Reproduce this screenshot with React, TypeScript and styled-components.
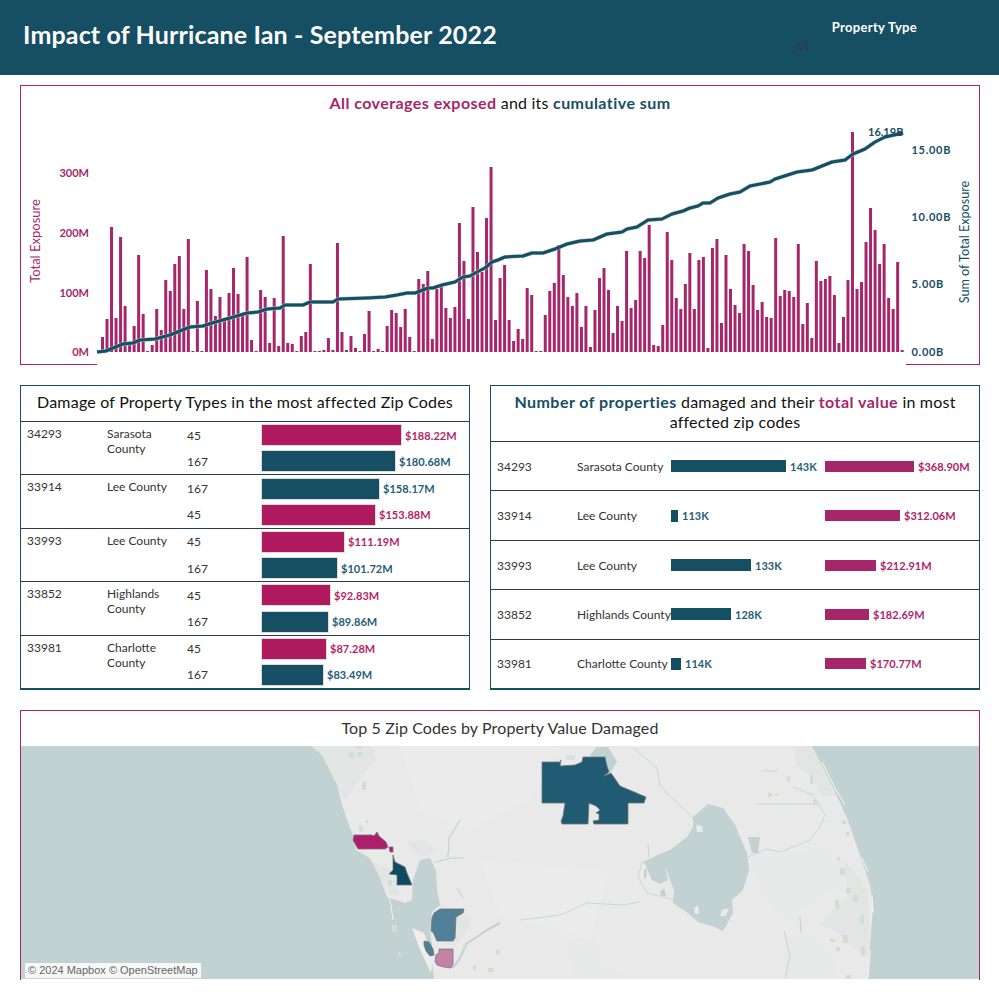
import { createGlobalStyle, styled } from "styled-components";

const TEAL = "#164e64";
const PLUM = "#a6266a";
const ROSE = "#ae1a5d";
const WATER = "#c2d1d1";
const LAND = "#e9e9e9";
const FONT = `"Lato", "Open Sans", sans-serif`;

const GlobalStyle = createGlobalStyle`
  html, body {
    margin: 0;
    padding: 0;
    background: #fff;
    font-family: ${FONT};
  }
`;

const Page = styled.div`
  width: 999px;
  height: 999px;
  overflow: hidden;
  display: flex;
  flex-direction: column;
`;

const Header = styled.header`
  height: 75px;
  flex: none;
  box-sizing: border-box;
  background: ${TEAL};
  color: #fff;
  display: flex;
  justify-content: space-between;
  padding: 0 82px 7px 23px;
`;

const HeaderTitle = styled.h1`
  margin: 0;
  align-self: center;
  font-size: 25px;
  font-weight: 700;
  letter-spacing: 0.15px;
`;

const Filter = styled.div`
  width: 170px;
  padding-top: 19px;
  position: relative;
  text-align: right;
  font-size: 13px;
  font-weight: 700;
  letter-spacing: 0.3px;
`;

const FilterValue = styled.span`
  position: absolute;
  left: 48px;
  top: 39px;
  font-size: 12px;
  font-weight: 400;
  color: #2f3f48;
`;

const Content = styled.main`
  flex: 1;
  display: flex;
  flex-direction: column;
  gap: 20px;
  padding: 10px 19px 0 20px;
`;

const ChartPanel = styled.section`
  height: 280px;
  box-sizing: border-box;
  border: 1px solid ${PLUM};
  border-bottom: none;
  background: linear-gradient(
      to right,
      ${PLUM} 76px,
      transparent 76px,
      transparent 885px,
      ${PLUM} 885px
    )
    bottom / 100% 1px no-repeat;
`;

const ChartTitle = styled.h2`
  margin: 0;
  box-sizing: border-box;
  padding-top: 7px;
  height: 25px;
  text-align: center;
  font-size: 16px;
  font-weight: 400;
  letter-spacing: 0.2px;
  color: #111;
`;

const Accent = styled.b<{ $tone: "teal" | "plum" }>`
  color: ${(p) => (p.$tone === "teal" ? TEAL : PLUM)};
  letter-spacing: 0.45px;
`;

const ChartSvg = styled.svg`
  display: block;
  width: 958px;
  height: 253px;
`;

const Row = styled.div`
  display: grid;
  grid-template-columns: 450px 490px;
  gap: 20px;
  height: 305px;
`;

const TablePanel = styled.section`
  box-sizing: border-box;
  border: 1px solid ${TEAL};
  border-bottom-width: 2px;
  display: flex;
  flex-direction: column;
`;

const TableTitle = styled.h2<{ $height: number }>`
  margin: 0;
  height: ${(p) => p.$height}px;
  box-sizing: border-box;
  flex: none;
  padding: 6px 12px 0;
  text-align: center;
  font-size: 16px;
  line-height: 20px;
  font-weight: 400;
  letter-spacing: 0.2px;
  color: #111;
  border-bottom: 1px solid #2b3d47;
`;

const ZipGroup = styled.div`
  flex: 1;
  display: grid;
  grid-template-columns: 80px 80px 1fr;
  padding-left: 6px;
  font-size: 12px;
  line-height: 15px;
  color: #333;
  border-bottom: 1px solid #2b3d47;
  &:last-child {
    border-bottom: none;
  }
`;

const ZipCell = styled.div`
  padding-top: 4px;
`;

const TypeRows = styled.div`
  display: grid;
  grid-auto-rows: 1fr;
`;

const TypeRow = styled.div`
  display: grid;
  grid-template-columns: 75px 1fr;
  align-items: center;
`;

const TypeBar = styled.div<{ $tone: string }>`
  height: 20px;
  background: ${(p) => p.$tone};
  box-shadow: 0 0 0 1px #dcdcdc;
`;

const BarLine = styled.div`
  display: flex;
  align-items: center;
  gap: 4px;
`;

const BarLabel = styled.span<{ $tone: string }>`
  color: ${(p) => p.$tone};
  font-size: 11px;
  font-weight: 700;
  letter-spacing: 0.05px;
`;

const ValueRow = styled.div`
  flex: 1;
  display: grid;
  grid-template-columns: 80px 94px 154px 1fr;
  align-items: center;
  padding-left: 6px;
  font-size: 12px;
  color: #333;
  border-bottom: 1px solid #2b3d47;
  &:last-child {
    border-bottom: none;
  }
`;

const ValueBar = styled.div<{ $tone: string; $height: number }>`
  height: ${(p) => p.$height}px;
  background: ${(p) => p.$tone};
`;

const MapPanel = styled.section`
  height: 270px;
  box-sizing: border-box;
  border: 1px solid ${PLUM};
  border-bottom: none;
  display: flex;
  flex-direction: column;
`;

const MapTitle = styled.h2`
  margin: 0;
  height: 35px;
  flex: none;
  box-sizing: border-box;
  padding-top: 7px;
  text-align: center;
  font-size: 16px;
  font-weight: 400;
  letter-spacing: 0.12px;
  color: #333;
`;

const MapArea = styled.div`
  position: relative;
  flex: 1;
  line-height: 0;
`;

const MapSvg = styled.svg`
  display: block;
  width: 958px;
  height: 233px;
`;

const Attribution = styled.span`
  position: absolute;
  left: 4px;
  bottom: 2px;
  padding: 0 3px;
  background: rgba(255, 255, 255, 0.85);
  font-family: "Liberation Sans", sans-serif;
  font-size: 11px;
  line-height: 15px;
  color: #666;
`;

// px height of each bar above the baseline, read left to right
const exposure = [
  15, 33, 125, 34, 115, 46, 8, 26, 97, 38, 1, 7, 43, 22, 72, 61, 88, 96, 43, 113, 1, 51, 1, 82, 63,
  36, 55, 32, 59, 84, 58, 39, 95, 12, 1, 62, 55, 9, 54, 6, 116, 9, 8, 1, 16, 20, 88, 1, 1, 2, 14, 2,
  109, 20, 2, 16, 4, 1, 18, 41, 1, 3, 1, 26, 42, 39, 25, 43, 15, 1, 73, 68, 81, 13, 63, 66, 44, 34,
  45, 129, 91, 33, 145, 100, 80, 134, 185, 32, 74, 87, 32, 11, 23, 13, 64, 57, 1, 1, 37, 61, 69,
  107, 77, 55, 46, 59, 25, 46, 5, 42, 74, 84, 62, 19, 46, 31, 101, 44, 52, 101, 94, 127, 7, 6, 27,
  120, 92, 54, 43, 68, 99, 43, 92, 95, 4, 104, 113, 29, 97, 63, 47, 39, 108, 101, 67, 42, 50, 35,
  34, 114, 56, 62, 61, 55, 108, 28, 49, 14, 91, 71, 73, 76, 57, 9, 35, 72, 220, 63, 70, 110, 144,
  122, 88, 108, 54, 43, 90, 2,
];

const cumulative =
  "97,352 106,351 113,348 123,344 133,343 140,340 155,339 170,335 180,331 190,327 203,326 212,323 230,318 247,313 258,312 267,309 280,308 285,305 303,305 310,302 333,302 338,299 367,298 385,297 397,295 407,293 415,293 428,288 433,288 442,285 455,282 463,277 470,276 477,272 485,268 492,262 498,260 505,257 523,256 532,253 543,253 555,249 567,244 580,241 593,240 607,234 622,232 627,229 637,227 648,220 662,219 672,214 683,211 690,208 698,206 703,203 710,203 718,198 730,194 740,192 750,186 770,182 775,179 797,172 812,170 832,162 845,160 853,154 865,149 875,142 885,137 903,133";

const typeGroups = [
  {
    zip: "34293",
    county: "Sarasota County",
    rows: [
      { type: "45", width: 139, label: "$188.22M", rose: true },
      { type: "167", width: 133, label: "$180.68M", rose: false },
    ],
  },
  {
    zip: "33914",
    county: "Lee County",
    rows: [
      { type: "167", width: 117, label: "$158.17M", rose: false },
      { type: "45", width: 113, label: "$153.88M", rose: true },
    ],
  },
  {
    zip: "33993",
    county: "Lee County",
    rows: [
      { type: "45", width: 82, label: "$111.19M", rose: true },
      { type: "167", width: 75, label: "$101.72M", rose: false },
    ],
  },
  {
    zip: "33852",
    county: "Highlands County",
    rows: [
      { type: "45", width: 68, label: "$92.83M", rose: true },
      { type: "167", width: 66, label: "$89.86M", rose: false },
    ],
  },
  {
    zip: "33981",
    county: "Charlotte County",
    rows: [
      { type: "45", width: 64, label: "$87.28M", rose: true },
      { type: "167", width: 61, label: "$83.49M", rose: false },
    ],
  },
];

const valueRows = [
  { zip: "34293", county: "Sarasota County", count: 115, countLabel: "143K", total: 89, totalLabel: "$368.90M" },
  { zip: "33914", county: "Lee County", count: 7, countLabel: "113K", total: 75, totalLabel: "$312.06M" },
  { zip: "33993", county: "Lee County", count: 80, countLabel: "133K", total: 51, totalLabel: "$212.91M" },
  { zip: "33852", county: "Highlands County", count: 60, countLabel: "128K", total: 44, totalLabel: "$182.69M" },
  { zip: "33981", county: "Charlotte County", count: 10, countLabel: "114K", total: 41, totalLabel: "$170.77M" },
];

const leftTicks = [
  { y: 353, text: "0M" },
  { y: 294, text: "100M" },
  { y: 234, text: "200M" },
  { y: 174, text: "300M" },
];

const rightTicks = [
  { y: 353.5, text: "0.00B" },
  { y: 285.5, text: "5.00B" },
  { y: 218.5, text: "10.00B" },
  { y: 151.5, text: "15.00B" },
];

// [x, y, w, h] of the small green parks on the map
const parks = [
  [349, 752, 5, 6], [357, 746, 5, 3], [358, 752, 4, 5], [362, 782, 4, 8], [359, 826, 4, 6], [366, 820, 2, 3],
  [388, 880, 4, 6], [392, 925, 5, 7], [398, 952, 3, 5], [430, 925, 3, 3], [463, 945, 4, 4], [496, 950, 4, 5],
  [473, 965, 3, 5], [488, 968, 5, 4], [768, 793, 4, 4], [775, 794, 3, 2], [787, 776, 3, 6], [810, 775, 3, 9],
  [813, 800, 4, 5], [842, 820, 4, 4], [846, 832, 3, 4], [837, 857, 3, 4], [840, 868, 5, 7], [846, 888, 5, 5],
  [853, 895, 5, 7], [835, 900, 4, 8], [860, 915, 4, 9], [843, 935, 5, 8], [830, 939, 5, 3], [861, 946, 4, 10],
  [846, 975, 5, 4], [836, 947, 4, 4],
];

function ExposureChart() {
  return (
    <ChartSvg viewBox="21 111 958 253">
      {exposure.map((h, i) => (
        <rect key={i} x={101 + i * 4.518} y={352 - h} width={3} height={h} fill={PLUM} />
      ))}
      <polyline points={cumulative} fill="none" stroke="#a9c2cb" strokeWidth={4} />
      <polyline points={cumulative} fill="none" stroke={TEAL} strokeWidth={3} strokeLinejoin="round" />
      <g fontFamily={FONT} fontSize={11} fontWeight={700} dominantBaseline="middle">
        {leftTicks.map((t) => (
          <text key={t.text} x={89} y={t.y} textAnchor="end" fill={PLUM}>
            {t.text}
          </text>
        ))}
        {rightTicks.map((t) => (
          <text key={t.text} x={911.5} y={t.y} fill={TEAL} letterSpacing={0.7}>
            {t.text}
          </text>
        ))}
        <text x={868} y={133} fill={TEAL}>
          16.19B
        </text>
      </g>
      <g fontFamily={FONT} textAnchor="middle">
        <text transform="translate(40 241) rotate(-90)" fill={PLUM} fontSize={13}>
          Total Exposure
        </text>
        <text transform="translate(969 242) rotate(-90)" fill={TEAL} fontSize={12.6}>
          Sum of Total Exposure
        </text>
      </g>
    </ChartSvg>
  );
}

function FloridaMap() {
  return (
    <MapSvg viewBox="21 746 958 233">
      <rect x={21} y={746} width={958} height={233} fill={LAND} />
      {/* soft land tones */}
      <g fill="#e3e4e4">
        <path d="M312 746 L372 746 L375 760 L355 785 L345 800 L330 778 Z" />
        <path d="M408 842 L425 840 L437 850 L425 858 L412 852 Z" />
        <path d="M372 862 L392 870 L400 895 L388 895 Z" />
        <path d="M795 746 L812 746 L835 795 L822 797 L810 775 L796 765 Z" />
        <path d="M845 860 L868 890 L870 960 L850 945 L835 930 L818 925 L848 895 Z" />
        <path d="M440 905 L470 915 L470 925 L456 945 L445 945 Z" />
      </g>
      <g fill="#ebebeb">
        <path d="M400 746 L560 746 L530 800 L470 830 L420 810 Z" />
        <path d="M480 860 L610 870 L590 940 L500 915 Z" />
      </g>
      <g fill="#e6e9e7">
        <path d="M752 860 L830 850 L845 880 L800 910 L800 930 L770 905 Z" />
        <path d="M785 935 L810 935 L835 960 L835 979 L785 979 Z" />
        <path d="M570 940 L595 938 L600 965 L630 978 L575 979 Z" />
      </g>
      {/* gulf */}
      <path
        fill={WATER}
        d="M21 746 L311 746 L322 755 L337 785 L342 805 L348 822 L353 835 L356 850 L370 858 L380 878 L387 897 L405 903 L412 900 L413 880 L420 860 L430 858 L436 870 L437 890 L440 905 L432 912 L430 930 L432 945 L432 962 L434 979 L21 979 Z"
      />
      <path fill="#eeeeee" d="M412 928 L424 933 L433 958 L431 973 L421 952 Z" />
      <path fill="none" stroke="#f1f3f3" strokeWidth={1} d="M386 885 L391 905 L393 920" />
      {/* atlantic */}
      <path
        fill={WATER}
        d="M812 746 L979 746 L979 979 L868 979 L870 945 L873 908 L870 885 L860 855 L847 818 L833 788 L820 762 Z"
      />
      <path
        fill="none"
        stroke="#f5f6f6"
        strokeWidth={1}
        d="M822 762 L835 788 L845 805 M862 858 L868 872 M872 895 L873 912 M870 950 L868 978"
      />
      {/* lake okeechobee */}
      <path
        fill={WATER}
        d="M693 817 L708 804 L723 808 L735 825 L747 853 L749 870 L743 890 L732 900 L733 913 L723 931 L715 927 L698 922 L688 913 L673 903 L674 890 L665 866 L668 880 L660 884 L652 880 L646 866 L643 862 L660 854 L670 850 L687 837 L693 827 Z"
      />
      <g fill={LAND}>
        <path d="M696 825 L702 826 L703 832 L697 832 Z" />
        <path d="M694 908 L698 905 L699 914 L695 914 Z" />
        <path d="M722 910 L729 908 L726 916 L720 916 Z" />
      </g>
      <g fill={WATER}>
        <path d="M660 892 L664 888 L666 896 L661 896 Z" />
        <path d="M644 870 L647 868 L646 878 L644 878 Z" />
        <path d="M748 837 L760 837 L758 853 L752 853 Z" />
        <path d="M590 755 L597 747 L608 747 L617 762 L610 773 Z" />
      </g>
      <path fill="#d6dfdf" d="M565 756 L575 755 L574 760 L567 760 Z" />
      {/* rivers */}
      <g fill="none" stroke={WATER} strokeLinejoin="round">
        <path strokeWidth={2} d="M500 923 L487 930 L477 937 L467 943 L460 958 L453 968" />
        <path strokeWidth={0.8} d="M520 920 L560 915 L587 903 L623 905 L640 902" />
        <path strokeWidth={1.2} d="M435 862 L452 858 L463 858 M448 857 L449 838 L460 820" />
        <path strokeWidth={1} d="M457 888 L463 898" />
        <path strokeWidth={0.8} d="M633 748 L648 760 L657 768 L660 785 L668 795 L680 805 L693 818" />
        <path strokeWidth={0.8} d="M642 862 L638 877 L647 893 L675 900" />
        <path strokeWidth={0.8} d="M648 843 L649 857" />
        <path strokeWidth={0.8} d="M748 857 L767 849 L780 852 L810 840 L820 827 L825 815 L813 795 L793 787" />
        <path strokeWidth={0.8} d="M757 804 L817 804" />
        <path strokeWidth={0.8} d="M762 771 L778 771" />
        <path strokeWidth={0.8} d="M784 931 L790 955 L785 979" />
        <path strokeWidth={1.2} d="M800 917 L801 932" />
      </g>
      {/* parks */}
      <g fill="#d3ddd0">
        {parks.map(([x, y, w, h]) => (
          <rect key={`${x}-${y}`} x={x} y={y} width={w} height={h} />
        ))}
      </g>
      {/* highlighted zip codes */}
      <g stroke="#777" strokeWidth={0.8} strokeLinejoin="round">
        <path
          fill="#215a73"
          d="M542 762 L560 762 L561 760 L560 766 L575 765 L582 762 L583 757 L605 757 L607 766 L609 772 L604 776 L611 773 L620 786 L646 797 L644 803 L628 803 L628 824 L594 824 L593 821 L599 820 L599 814 L596 813 L600 810 L596 806 L591 804 L589 803 L588 824 L562 824 L561 821 L563 816 L565 803 L542 803 Z"
        />
        <path
          fill="#ad1f6c"
          d="M353 840 L354 835 L372 835 L374 836 L377 832 L379 836 L386 842 L388 847 L385 849 L358 849 Z"
        />
        <path fill="#ad1f6c" d="M389 847 L393 847 L393 852 L390 852 Z" />
        <path
          fill="#0f4a63"
          d="M393 855 L395 862 L405 867 L407 873 L412 885 L397 885 L397 875 L389 874 L393 870 Z"
        />
        <path
          fill="#507f99"
          d="M440 909 L464 909 L463 913 L456 917 L455 938 L453 941 L437 941 L433 932 L431 931 L432 918 L434 913 Z"
        />
        <path fill="#507f99" d="M424 941 L429 942 L433 949 L434 955 L430 956 L426 951 L424 945 Z" />
        <path
          fill="#c582a8"
          d="M439 949 L453 949 L453 965 L451 968 L444 967 L437 965 L435 961 L436 955 L439 953 Z"
        />
      </g>
    </MapSvg>
  );
}

export default function App() {
  return (
    <Page>
      <GlobalStyle />
      <Header>
        <HeaderTitle>Impact of Hurricane Ian - September 2022</HeaderTitle>
        <Filter>
          Property Type
          <FilterValue>All</FilterValue>
        </Filter>
      </Header>
      <Content>
        <ChartPanel>
          <ChartTitle>
            <Accent $tone="plum">All coverages exposed</Accent> and its{" "}
            <Accent $tone="teal">cumulative sum</Accent>
          </ChartTitle>
          <ExposureChart />
        </ChartPanel>
        <Row>
          <TablePanel>
            <TableTitle $height={36}>Damage of Property Types in the most affected Zip Codes</TableTitle>
            {typeGroups.map((g) => (
              <ZipGroup key={g.zip}>
                <ZipCell>{g.zip}</ZipCell>
                <ZipCell>{g.county}</ZipCell>
                <TypeRows>
                  {g.rows.map((r) => {
                    const tone = r.rose ? ROSE : TEAL;
                    return (
                      <TypeRow key={r.type}>
                        <span>{r.type}</span>
                        <BarLine>
                          <TypeBar $tone={tone} style={{ width: r.width }} />
                          <BarLabel $tone={r.rose ? "#b81f66" : "#1f5d78"}>{r.label}</BarLabel>
                        </BarLine>
                      </TypeRow>
                    );
                  })}
                </TypeRows>
              </ZipGroup>
            ))}
          </TablePanel>
          <TablePanel>
            <TableTitle $height={56}>
              <Accent $tone="teal">Number of properties</Accent> damaged and their{" "}
              <Accent $tone="plum">total value</Accent> in most affected zip codes
            </TableTitle>
            {valueRows.map((r) => (
              <ValueRow key={r.zip}>
                <span>{r.zip}</span>
                <span>{r.county}</span>
                <BarLine>
                  <ValueBar $tone={TEAL} $height={12} style={{ width: r.count }} />
                  <BarLabel $tone="#1f5d78">{r.countLabel}</BarLabel>
                </BarLine>
                <BarLine>
                  <ValueBar $tone={PLUM} $height={11} style={{ width: r.total }} />
                  <BarLabel $tone="#b0246a">{r.totalLabel}</BarLabel>
                </BarLine>
              </ValueRow>
            ))}
          </TablePanel>
        </Row>
        <MapPanel>
          <MapTitle>Top 5 Zip Codes by Property Value Damaged</MapTitle>
          <MapArea>
            <FloridaMap />
            <Attribution>© 2024 Mapbox © OpenStreetMap</Attribution>
          </MapArea>
        </MapPanel>
      </Content>
    </Page>
  );
}
